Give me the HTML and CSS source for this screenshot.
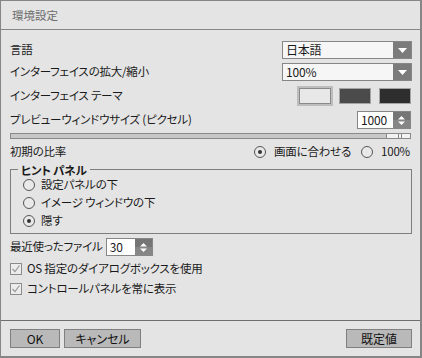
FILE: index.html
```html
<!DOCTYPE html>
<html lang="ja">
<head>
<meta charset="utf-8">
<link rel="stylesheet" href="styles.css">
</head>
<body>
<div class="window">
  <div class="titlebar">環境設定</div>
  <div class="content">
    <div class="row r-lang">
      <span class="label">言語</span>
      <div class="select"><span class="select-text">日本語</span><span class="select-btn"><svg width="9" height="5" viewBox="0 0 9 5"><path d="M0 0H9L4.5 5Z" fill="#fff"/></svg></span></div>
    </div>
    <div class="row r-zoom">
      <span class="label">インターフェイスの拡大/縮小</span>
      <div class="select"><span class="select-text">100%</span><span class="select-btn"><svg width="9" height="5" viewBox="0 0 9 5"><path d="M0 0H9L4.5 5Z" fill="#fff"/></svg></span></div>
    </div>
    <div class="row r-theme">
      <span class="label">インターフェイス テーマ</span>
      <div class="swatches">
        <span class="swatch sw-light selected"></span>
        <span class="swatch sw-mid"></span>
        <span class="swatch sw-dark"></span>
      </div>
    </div>
    <div class="row r-preview">
      <span class="label">プレビューウィンドウサイズ (ピクセル)</span>
      <div class="spin spin-wide"><span class="spin-text">1000</span><span class="spin-btn"><svg width="9" height="11" viewBox="0 0 9 11"><path d="M1 4.5H8L4.5 1Z M1 6.5H8L4.5 10Z" fill="#fff"/></svg></span></div>
    </div>
    <div class="slider"><span class="thumb"><i></i><i></i></span></div>
    <div class="row r-ratio">
      <span class="label">初期の比率</span>
      <div class="radios">
        <span class="radio checked"></span><span class="rtext">画面に合わせる</span>
        <span class="radio r2"></span><span class="rtext">100%</span>
      </div>
    </div>
    <div class="group">
      <span class="legend">ヒント パネル</span>
      <div class="gitem"><span class="radio"></span><span>設定パネルの下</span></div>
      <div class="gitem"><span class="radio"></span><span>イメージ ウィンドウの下</span></div>
      <div class="gitem"><span class="radio checked"></span><span>隠す</span></div>
    </div>
    <div class="row r-recent">
      <span class="label">最近使ったファイル</span>
      <div class="spin spin-small"><span class="spin-text">30</span><span class="spin-btn"><svg width="9" height="11" viewBox="0 0 9 11"><path d="M1 4.5H8L4.5 1Z M1 6.5H8L4.5 10Z" fill="#fff"/></svg></span></div>
    </div>
    <div class="check c1"><span class="box"><svg width="10" height="10" viewBox="0 0 10 10"><path d="M1.5 5L4 7.5L8.5 1.5" fill="none" stroke="#9a9a9a" stroke-width="1.2"/></svg></span><span>OS 指定のダイアログボックスを使用</span></div>
    <div class="check c2"><span class="box"><svg width="10" height="10" viewBox="0 0 10 10"><path d="M1.5 5L4 7.5L8.5 1.5" fill="none" stroke="#9a9a9a" stroke-width="1.2"/></svg></span><span>コントロールパネルを常に表示</span></div>
  </div>
  <div class="footer">
    <button class="btn b-ok">OK</button>
    <button class="btn b-cancel">キャンセル</button>
    <span class="spacer"></span>
    <button class="btn b-default">既定値</button>
  </div>
</div>
</body>
</html>
```
FILE: styles.css
```css
* { box-sizing: border-box; }
html, body { margin: 0; padding: 0; }
body {
  width: 422px;
  height: 358px;
  font-family: "Noto Sans CJK JP", "Noto Sans", sans-serif;
  font-feature-settings: "palt" 1;
  font-size: 11.5px;
  letter-spacing: -0.2px;
  color: #1a1a1a;
  background: #e4e4e4;
}
.window {
  width: 422px;
  height: 358px;
  border: 1px solid #868686;
  border-right-width: 2px;
  border-bottom-width: 2px;
  background: #e4e4e4;
  display: flex;
  flex-direction: column;
}
.titlebar {
  height: 29px;
  flex: none;
  border-bottom: 1px solid #868686;
  padding-left: 11px;
  display: flex;
  align-items: center;
  color: #6c6c6c;
  font-size: 11.5px;
  letter-spacing: 0;
}
.content {
  flex: 1;
  display: flex;
  flex-direction: column;
  padding: 0 8px 0 9px;
}
.row {
  display: flex;
  align-items: center;
  justify-content: space-between;
  height: 18px;
  line-height: 1;
}
.r-lang { margin-top: 11px; }
.r-zoom { margin-top: 4px; }
.r-theme { margin-top: 6px; }
.r-preview { margin-top: 6px; }
.r-ratio { margin-top: 6px; height: 14px; }
.r-recent { margin-top: 4px; justify-content: flex-start; gap: 3px; }

.select {
  width: 130px;
  height: 18px;
  border: 1px solid #868686;
  background: #f6f6f6;
  display: flex;
}
.select-text {
  flex: 1;
  padding-left: 3px;
  display: flex;
  align-items: center;
  font-size: 12px;
}
.select-btn {
  width: 18px;
  background: #7b7b7b;
  display: flex;
  align-items: center;
  justify-content: center;
}

.swatches {
  display: flex;
  gap: 8px;
  margin-right: 1px;
}
.swatch {
  width: 32px;
  height: 16px;
  border: 1px solid #a4a4a4;
}
.sw-light { background: #e8e8e8; border-color: #8a8a8a; }
.sw-light.selected { box-shadow: 0 0 0 2px #bdbdbd; }
.sw-mid { background: #4b4b4b; }
.sw-dark { background: #2e2e2e; }

.spin {
  height: 18px;
  border: 1px solid #868686;
  display: flex;
  background: #fff;
}
.spin-wide { width: 54px; margin-right: 1px; }
.spin-small { width: 47px; }
.spin-text {
  flex: 1;
  display: flex;
  align-items: center;
  padding-left: 3px;
  font-size: 12px;
}
.spin-btn {
  width: 17px;
  background: linear-gradient(#757575 50%, #868686 50%);
  display: flex;
  align-items: center;
  justify-content: center;
}

.slider {
  margin-top: 4px;
  height: 6px;
  margin-right: 1px;
  border: 1px solid #8a8a8a;
  background: #c8c8c8;
  position: relative;
}
.thumb {
  position: absolute;
  right: -1px;
  top: -1px;
  width: 25px;
  height: 6px;
  border: 1px solid #8a8a8a;
  background: #f2f2f2;
  display: flex;
  gap: 2px;
  justify-content: flex-end;
  padding-right: 8px;
}
.thumb i {
  display: block;
  width: 1px;
  height: 100%;
  background: #8a8a8a;
}

.radios {
  display: flex;
  align-items: center;
  margin-right: 2px;
}
.radio {
  width: 12px;
  height: 12px;
  border: 1px solid #555;
  border-radius: 50%;
  background: #e9e9e9;
  display: inline-flex;
  align-items: center;
  justify-content: center;
  flex: none;
}
.radio.checked::after {
  content: "";
  width: 4px;
  height: 4px;
  border-radius: 50%;
  background: #333;
}
.rtext { margin-left: 8px; }
.r2 { margin-left: 10px; }

.group {
  position: relative;
  margin-top: 10px;
  height: 65px;
  margin-right: 0;
  border: 1px solid #7e7e7e;
  padding: 6px 0 0 12px;
}
.legend {
  position: absolute;
  top: -8px;
  left: 7px;
  padding: 0 3px;
  background: #e4e4e4;
  font-weight: bold;
  line-height: 16px;
}
.gitem {
  height: 18px;
  display: flex;
  align-items: center;
  gap: 6px;
  line-height: 1;
}

.check {
  display: flex;
  align-items: center;
  gap: 5px;
  height: 14px;
  margin-top: 6px;
  line-height: 1;
}
.box {
  width: 12px;
  height: 12px;
  border: 1px solid #8c8c8c;
  background: #ececec;
  display: flex;
  align-items: center;
  justify-content: center;
}

.footer {
  flex: none;
  height: 36px;
  border-top: 1px solid #6e6e6e;
  display: flex;
  align-items: flex-start;
  padding: 8px 8px 0 9px;
  gap: 4px;
}
.spacer { flex: 1; }
.btn {
  height: 19px;
  border: 1px solid #808080;
  background: #b9b9b9;
  font-family: inherit;
  font-feature-settings: "palt" 1;
  font-size: 12px;
  color: #111;
  padding: 0;
  line-height: 1;
}
.b-ok { width: 50px; }
.b-cancel { width: 77px; }
.b-default { width: 66px; }
```
